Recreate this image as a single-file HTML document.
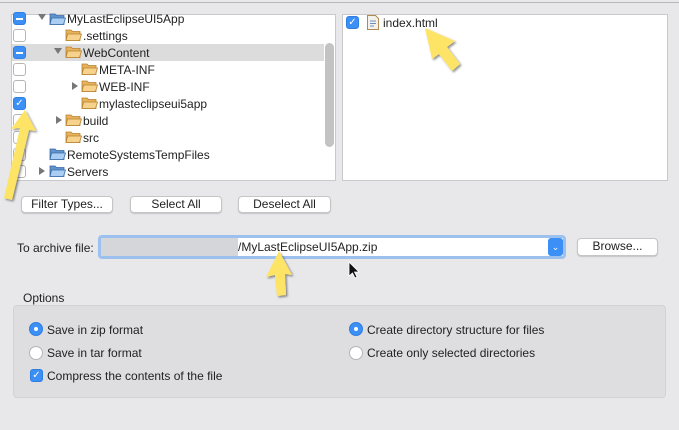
<!DOCTYPE html>
<html><head><style>
*{box-sizing:border-box;margin:0;padding:0}
body{width:679px;height:430px;background:#e8e7e9;font-family:"Liberation Sans",sans-serif;font-size:12px;color:#222;position:relative;overflow:hidden}
.abs{position:absolute}
.panel{position:absolute;background:#fff;border:1px solid #c9c9c9}
.cb{position:absolute;width:13px;height:13px;border:1px solid #b5b5b5;border-radius:3px;background:#fff}
.cb.on{background:#3b8ff5;border-color:#2f7fe0}
.btn{position:absolute;height:17px;background:#fff;border:1px solid #c5c5c5;border-radius:4px;box-shadow:0 1px 1px rgba(0,0,0,.15);text-align:center;line-height:15px;font-size:12px}
.radio{position:absolute;width:14px;height:14px;border-radius:50%;border:1px solid #b5b5b5;background:#fff}
.radio.on{background:#3b8ff5;border-color:#2f7fe0}
.radio.on::after{content:"";position:absolute;left:4px;top:4px;width:4px;height:4px;border-radius:50%;background:#fff}
.lbl{position:absolute;font-size:12px;line-height:14px}
</style></head><body>
<div class="abs" style="left:0;top:2px;width:679px;height:1px;background:#b8b8b8"></div>
<div class="panel" style="left:11px;top:14px;width:325px;height:167px;overflow:hidden">
 <div class="abs" style="left:0;top:29px;width:312px;height:17px;background:#dcdcdc"></div>
 <div class="abs" style="left:313px;top:28px;width:9px;height:104px;background:#c3c3c3;border-radius:5px"></div>
</div>
<svg class="abs" style="left:0;top:0" width="340" height="185">
 <defs>
  <g id="f"><path d="M0 2 h5 l1.5 1.5 h7.5 v9 h-14z" fill="#e7b25b" stroke="#b6812c" stroke-width=".8"/><path d="M1.5 6 h14 l-2 6.5 h-13.5z" fill="#f6d28d" stroke="#b6812c" stroke-width=".8"/></g>
  <g id="b"><path d="M0 2 h5 l1.5 1.5 h7.5 v9 h-14z" fill="#5e93cf" stroke="#3a6aa6" stroke-width=".8"/><path d="M1.5 6 h14 l-2 6.5 h-13.5z" fill="#a9cdf3" stroke="#3a6aa6" stroke-width=".8"/></g>
 </defs>
 <g font-family="Liberation Sans" font-size="12" fill="#222">
 <use href="#b" x="50" y="12"/><text x="67" y="23">MyLastEclipseUI5App</text>
 <use href="#f" x="66" y="28"/><text x="83" y="40">.settings</text>
 <use href="#f" x="66" y="45"/><text x="83" y="57">WebContent</text>
 <use href="#f" x="82" y="62"/><text x="99" y="74">META-INF</text>
 <use href="#f" x="82" y="79"/><text x="99" y="91">WEB-INF</text>
 <use href="#f" x="82" y="96"/><text x="99" y="108">mylasteclipseui5app</text>
 <use href="#f" x="66" y="113"/><text x="83" y="125">build</text>
 <use href="#f" x="66" y="130"/><text x="83" y="142">src</text>
 <use href="#b" x="50" y="147"/><text x="67" y="159">RemoteSystemsTempFiles</text>
 <use href="#b" x="50" y="164"/><text x="67" y="176">Servers</text>
 </g>
 <g fill="#777">
 <path d="M38 14 h8 l-4 6z"/><path d="M54 48 h8 l-4 6z"/>
 <path d="M72 82 v8 l6 -4z"/><path d="M56 116 v8 l6 -4z"/><path d="M39 167 v8 l6 -4z"/>
 </g>
</svg>
<div class="cb on" style="left:13px;top:12px"><div class="abs" style="left:2px;top:5px;width:7px;height:2px;background:#fff"></div></div>
<div class="cb" style="left:13px;top:29px"></div>
<div class="cb on" style="left:13px;top:46px"><div class="abs" style="left:2px;top:5px;width:7px;height:2px;background:#fff"></div></div>
<div class="cb" style="left:13px;top:63px"></div>
<div class="cb" style="left:13px;top:80px"></div>
<div class="cb on" style="left:13px;top:97px;color:#fff;font-size:10px;line-height:11px;text-align:center">✓</div>
<div class="cb" style="left:13px;top:114px"></div>
<div class="cb" style="left:13px;top:131px"></div>
<div class="cb" style="left:13px;top:148px"></div>
<div class="cb" style="left:13px;top:165px"></div>

<div class="panel" style="left:342px;top:14px;width:326px;height:167px"></div>
<div class="cb on" style="left:346px;top:16px;color:#fff;font-size:10px;line-height:11px;text-align:center">✓</div>
<svg class="abs" style="left:367px;top:15px" width="12" height="15"><path d="M.5 .5 h8 l3 3 v11 h-11z" fill="#f4f1ea" stroke="#b08a50"/><path d="M3 6h6M3 8.5h6M3 11h4" stroke="#6b8fc4"/></svg>
<div class="lbl" style="left:383px;top:16px">index.html</div>

<div class="btn" style="left:21px;top:196px;width:92px">Filter Types...</div>
<div class="btn" style="left:130px;top:196px;width:92px">Select All</div>
<div class="btn" style="left:238px;top:196px;width:93px">Deselect All</div>

<div class="lbl" style="left:17px;top:241px">To archive file:</div>
<div class="abs" style="left:98px;top:235px;width:468px;height:24px;border:3px solid #9dc1ef;border-radius:4px;background:#fff"></div>
<div class="abs" style="left:101px;top:238px;width:137px;height:18px;background:#d4d6da"></div>
<div class="lbl" style="left:238px;top:240px">/MyLastEclipseUI5App.zip</div>
<div class="abs" style="left:548px;top:238px;width:15px;height:18px;background:#3b8ff5;border-radius:3px;color:#fff;font-size:9px;text-align:center;line-height:18px">⌄</div>
<div class="btn" style="left:577px;top:238px;width:81px;height:18px">Browse...</div>

<div class="lbl" style="left:23px;top:291px">Options</div>
<div class="abs" style="left:13px;top:305px;width:653px;height:93px;background:#dedddf;border:1px solid #d2d2d4;border-radius:4px"></div>
<div class="radio on" style="left:29px;top:322px"></div><div class="lbl" style="left:47px;top:323px">Save in zip format</div>
<div class="radio" style="left:29px;top:346px"></div><div class="lbl" style="left:47px;top:346px">Save in tar format</div>
<div class="cb on" style="left:30px;top:369px;width:13px;height:13px;color:#fff;font-size:10px;line-height:11px;text-align:center">✓</div><div class="lbl" style="left:47px;top:369px">Compress the contents of the file</div>
<div class="radio on" style="left:349px;top:322px"></div><div class="lbl" style="left:367px;top:323px">Create directory structure for files</div>
<div class="radio" style="left:349px;top:346px"></div><div class="lbl" style="left:367px;top:346px">Create only selected directories</div>

<svg class="abs" style="left:0;top:0" width="679" height="430">
 <defs><filter id="sh"><feDropShadow dx="1.5" dy="1.5" stdDeviation="1" flood-color="#000" flood-opacity=".45"/></filter></defs>
 <g fill="#fde466" filter="url(#sh)">
 <path d="M25 110 L36 131 L29 130 L12 200 L4 198 L20 128 L11 129z"/>
 <path d="M425 28 L455 41 L447 47 L460 64 L452 71 L439 54 L432 59z"/>
 <path d="M279 251 L292 275 L285 274 L286 295 L277 296 L275 275 L266 277z"/>
 </g>
 <path d="M349 262 v14 l3.5 -3 l2.5 5 l2 -1 l-2.5 -5 h4.5z" fill="#111" stroke="#fff" stroke-width=".8"/>
</svg>
</body></html>
